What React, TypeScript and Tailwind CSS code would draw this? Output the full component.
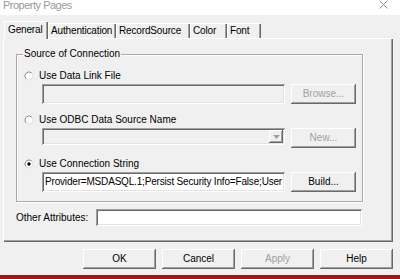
const raised =
  'shadow-[inset_-1px_-1px_0_#696969,inset_1px_1px_0_#ffffff,inset_-2px_-2px_0_#a0a0a0,inset_2px_2px_0_#f0f0f0]'
const sunken =
  'shadow-[inset_1px_1px_0_#a0a0a0,inset_-1px_-1px_0_#ffffff,inset_2px_2px_0_#696969,inset_-2px_-2px_0_#e3e3e3]'

interface TabItem {
  label: string
  width: string
  active?: boolean
}

const tabs: TabItem[] = [
  { label: 'General', width: 'w-[44px]', active: true },
  { label: 'Authentication', width: 'w-[68px]' },
  { label: 'RecordSource', width: 'w-[74px]' },
  { label: 'Color', width: 'w-[37px]' },
  { label: 'Font', width: 'w-[34px]' },
]

function Radio({ label, checked }: { label: string; checked?: boolean }) {
  return (
    <div className="flex h-[12px] items-center">
      <svg width="10" height="10" viewBox="0 0 10 10" className="ml-[7px] shrink-0">
        <circle cx="5" cy="5" r="4" fill="#ffffff" />
        <path d="M2.17 7.83A4 4 0 0 1 7.83 2.17" stroke="#8a8a8a" fill="none" />
        <path d="M7.83 2.17A4 4 0 0 1 2.17 7.83" stroke="#dcdcdc" fill="none" />
        {checked && <circle cx="5" cy="5" r="1.7" fill="#000000" />}
      </svg>
      <span className="ml-[5px]">{label}</span>
    </div>
  )
}

function Button({ label, disabled, width }: { label: string; disabled?: boolean; width: string }) {
  return (
    <div
      className={`flex h-[20px] ${width} items-center justify-center bg-[#f0f0f0] ${raised} ${
        disabled ? 'text-[#a0a0a0]' : 'text-black'
      }`}
    >
      {label}
    </div>
  )
}

export default function App() {
  return (
    <div className="flex h-[279px] w-[400px] flex-col overflow-hidden bg-[#f0f0f0] font-['Liberation_Sans',Arial,sans-serif] text-[10px] leading-[12px] text-black">
      {/* title bar */}
      <div className="flex h-[15px] shrink-0 items-start justify-between overflow-hidden bg-white">
        <span className="ml-[3px] text-[11px] leading-[11px] tracking-[-0.5px] text-[#9a9a9a]">
          Property Pages
        </span>
        <svg width="9" height="9" viewBox="0 0 9 9" className="mr-[12px]">
          <path d="M0.5 0.5L8.5 8.5M8.5 0.5L0.5 8.5" stroke="#8c8c8c" strokeWidth="1" />
        </svg>
      </div>

      {/* tabs */}
      <div className="flex h-[23px] shrink-0 items-end pl-[4px] tracking-[-0.15px]">
        {tabs.map((tab) =>
          tab.active ? (
            <div
              key={tab.label}
              className={`relative z-10 -mb-px flex h-[18px] ${tab.width} items-center bg-[#f0f0f0] pl-[4px] shadow-[inset_1px_1px_0_#ffffff,inset_-1px_0_0_#696969,inset_-2px_0_0_#a0a0a0]`}
            >
              {tab.label}
            </div>
          ) : (
            <div
              key={tab.label}
              className={`flex h-[15px] ${tab.width} items-center pl-[3px] shadow-[inset_1px_1px_0_#ffffff,inset_-1px_0_0_#696969,inset_-2px_0_0_#a0a0a0]`}
            >
              {tab.label}
            </div>
          )
        )}
      </div>

      {/* tab page */}
      <div className="ml-[3px] flex h-[204px] w-[390px] shrink-0 flex-col pl-[13px] shadow-[inset_1px_1px_0_#ffffff,inset_-1px_-1px_0_#696969,inset_-2px_-2px_0_#a0a0a0]">
        <div className="relative mt-[16px] flex w-[347px] flex-col border border-[#a8a8a8] pb-[9px] shadow-[inset_1px_1px_0_#ffffff,1px_1px_0_#ffffff]">
          <span className="absolute -top-[7px] left-[6px] bg-[#f0f0f0] px-[1px]">Source of Connection</span>

          <div className="mt-[15px]">
            <Radio label="Use Data Link File" />
          </div>
          <div className="ml-[25px] mt-[2px] flex gap-[6px]">
            <div className={`h-[20px] w-[243px] bg-[#f0f0f0] ${sunken}`} />
            <Button label="Browse..." width="w-[65px]" disabled />
          </div>

          <div className="mt-[10px]">
            <Radio label="Use ODBC Data Source Name" />
          </div>
          <div className="ml-[25px] mt-[2px] flex items-start gap-[6px]">
            <div className={`flex h-[17px] w-[243px] justify-end bg-[#f0f0f0] p-[2px] ${sunken}`}>
              <div className={`flex h-full w-[14px] items-center justify-center ${raised}`}>
                <svg width="7" height="4" viewBox="0 0 7 4">
                  <polygon points="0,0 7,0 3.5,4" fill="#a0a0a0" />
                </svg>
              </div>
            </div>
            <Button label="New..." width="w-[65px]" disabled />
          </div>

          <div className="mt-[10px]">
            <Radio label="Use Connection String" checked />
          </div>
          <div className="ml-[25px] mt-[2px] flex gap-[6px]">
            <div
              className={`flex h-[20px] w-[243px] items-center overflow-hidden whitespace-nowrap bg-white pl-[3px] tracking-[-0.18px] ${sunken}`}
            >
              Provider=MSDASQL.1;Persist Security Info=False;User
            </div>
            <Button label="Build..." width="w-[65px]" />
          </div>
        </div>

        <div className="mt-[7px] flex h-[17px] items-center">
          <span className="w-[80px]">Other Attributes:</span>
          <div className={`h-[17px] w-[266px] bg-white ${sunken}`} />
        </div>
      </div>

      {/* dialog buttons */}
      <div className="mt-[7px] flex shrink-0 justify-end gap-[6px] pr-[7px]">
        <Button label="OK" width="w-[73px]" />
        <Button label="Cancel" width="w-[73px]" />
        <Button label="Apply" width="w-[73px]" disabled />
        <Button label="Help" width="w-[73px]" />
      </div>

      <div className="mt-[6px] h-[4px] shrink-0 bg-[#a31414]" />
    </div>
  )
}
